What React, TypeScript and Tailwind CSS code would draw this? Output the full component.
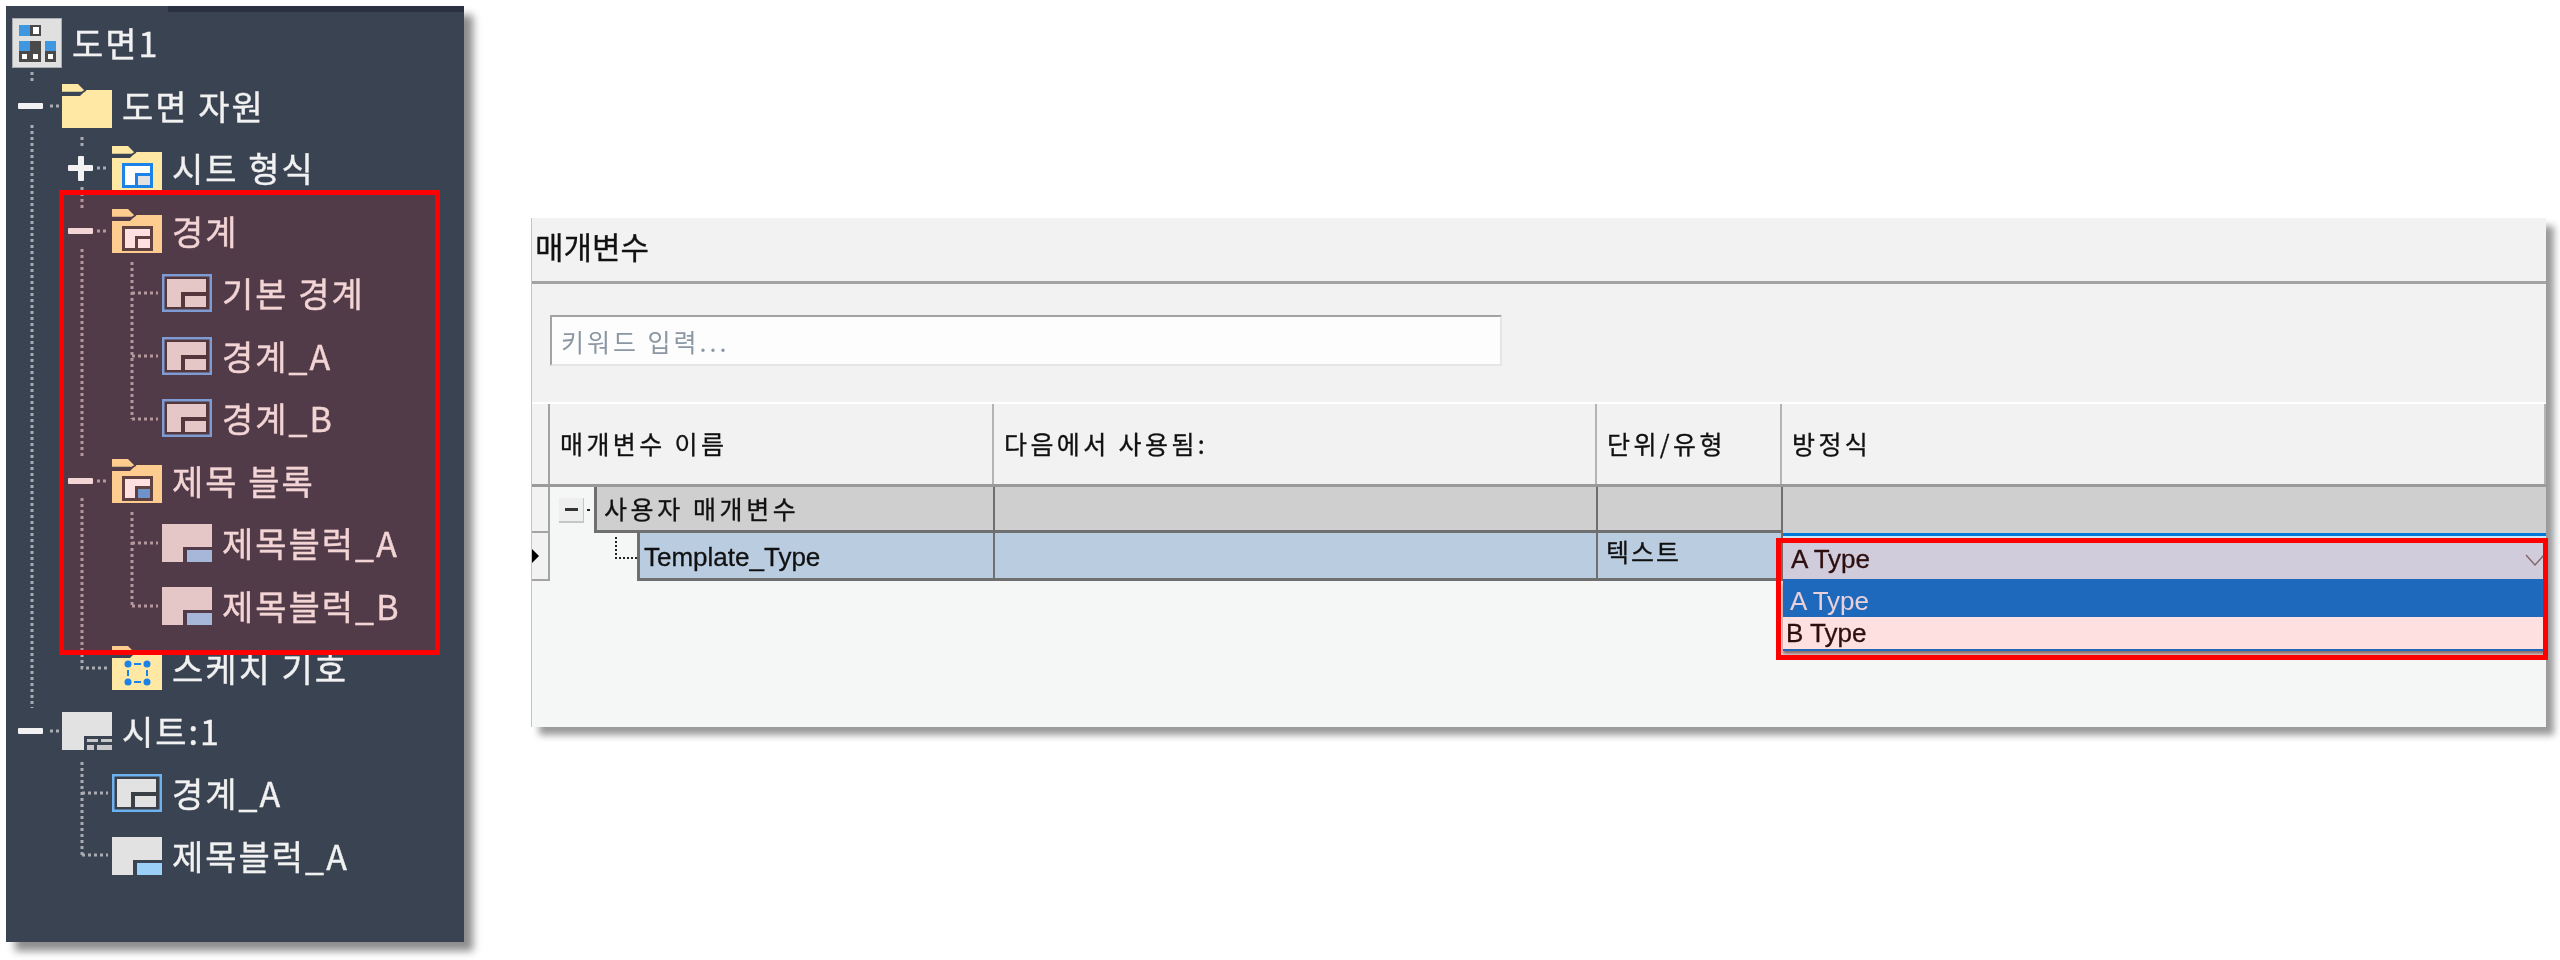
const krFont = "font-['Noto_Sans_CJK_KR','Liberation_Sans',sans-serif]";

function Folder({ children }: { children?: React.ReactNode }) {
  return (
    <svg width="50" height="44" viewBox="0 0 50 44" className="shrink-0">
      <path d="M0 0H16L22 6H50V44H0V12H18L22 8H0Z" fill="#ffe8a4" />
      <path d="M0 8.5H20L24 6" stroke="#3a4352" strokeWidth="1.5" fill="none" />
      {children}
    </svg>
  );
}

function InnerFrame({ color, block }: { color: string; block: string }) {
  return (
    <g>
      <rect x="10" y="17" width="31" height="25" fill={color} />
      <path d="M13 20H38V27H23V39H13Z" fill="#fff" />
      <rect x="26" y="30" width="12" height="9" fill={block} />
    </g>
  );
}

function SketchGlyph() {
  return (
    <g fill="#1b82e8">
      <circle cx="16" cy="18" r="3.5" />
      <circle cx="35" cy="18" r="3.5" />
      <circle cx="16" cy="36" r="3.5" />
      <circle cx="35" cy="36" r="3.5" />
      <rect x="22" y="17" width="7" height="2" />
      <rect x="22" y="35" width="7" height="2" />
      <rect x="15" y="24" width="2" height="6" />
      <rect x="34" y="24" width="2" height="6" />
    </g>
  );
}

function BorderIcon() {
  return (
    <svg width="50" height="38" viewBox="0 0 50 38" className="shrink-0">
      <rect width="50" height="38" fill="#6cb2f0" />
      <rect x="2.5" y="2.5" width="45" height="33" fill="#3b3f46" />
      <path d="M5 5H44V18H19V33H5Z" fill="#e2e2e2" />
      <rect x="23" y="22" width="21" height="11" fill="#e2e2e2" />
    </svg>
  );
}

function TitleBlockIcon() {
  return (
    <svg width="50" height="38" viewBox="0 0 50 38" className="shrink-0">
      <path d="M0 0H50V23H21V38H0Z" fill="#e2e2e2" />
      <rect x="25" y="26" width="25" height="12" fill="#9bd0f8" />
    </svg>
  );
}

function SheetIcon() {
  return (
    <svg width="50" height="38" viewBox="0 0 50 38" className="shrink-0">
      <path d="M0 0H50V24H22V38H0Z" fill="#e2e2e2" />
      <rect x="25" y="27" width="11" height="3" fill="#c8c8c8" />
      <rect x="39" y="27" width="11" height="3" fill="#c8c8c8" />
      <rect x="25" y="33" width="7" height="5" fill="#c8c8c8" />
      <rect x="35" y="33" width="15" height="5" fill="#c8c8c8" />
    </svg>
  );
}

function DrawingIcon() {
  return (
    <svg width="50" height="50" viewBox="0 0 50 50" className="shrink-0">
      <rect width="50" height="50" fill="#e0e0e0" />
      <rect x="0.5" y="0.5" width="49" height="49" fill="none" stroke="#a9adb2" />
      <rect x="7" y="7" width="22" height="11" fill="#4a4a4a" />
      <rect x="7" y="7" width="11" height="11" fill="#3f97e0" />
      <rect x="21" y="9" width="6" height="7" fill="#fff" />
      <rect x="7" y="23" width="22" height="21" fill="#4a4a4a" />
      <rect x="7" y="23" width="11" height="10" fill="#3f97e0" />
      <rect x="10" y="36" width="5" height="5" fill="#fff" />
      <rect x="21" y="36" width="5" height="5" fill="#fff" />
      <rect x="33" y="23" width="11" height="21" fill="#4a4a4a" />
      <rect x="33" y="23" width="11" height="10" fill="#3f97e0" />
      <rect x="36" y="36" width="5" height="5" fill="#fff" />
    </svg>
  );
}

function Expander({ type }: { type?: "plus" | "minus" }) {
  return (
    <span className="w-[50px] shrink-0 pl-[6px] flex items-center">
      {type && (
        <span className="relative w-[25px] h-[6px] bg-[#f2f2f2] rounded-[1px]">
          {type === "plus" && (
            <span className="absolute left-[9.5px] top-[-9.5px] w-[6px] h-[25px] bg-[#f2f2f2] rounded-[1px]" />
          )}
        </span>
      )}
    </span>
  );
}

function TreeRow({
  level,
  expander,
  icon,
  label,
}: {
  level: 0 | 1 | 2 | 3;
  expander?: "plus" | "minus";
  icon: React.ReactNode;
  label: string;
}) {
  const indent = ["w-0", "w-0", "w-[50px]", "w-[100px]"][level];
  return (
    <div className="h-[62.5px] flex items-center pl-[6px]">
      <span className={`${indent} shrink-0`} />
      {level > 0 && <Expander type={expander} />}
      <span className="w-[50px] flex justify-center">{icon}</span>
      <span className="ml-[10px] text-[34px] leading-none text-[#f1f1f1] tracking-[2px] whitespace-pre [-webkit-text-stroke:0.4px]">
        {label}
      </span>
    </div>
  );
}

// connector dots, written in page coordinates
function TreeLines() {
  const lines = [
    "M32 72V84",
    "M32 125V708",
    "M50 106H60",
    "M82 137V146",
    "M82 187V208",
    "M97 168H108",
    "M97 231H108",
    "M82 249V458",
    "M82 498V668H108",
    "M132 262V419",
    "M132 293H158",
    "M132 356H158",
    "M132 419H158",
    "M132 512V606",
    "M132 543H158",
    "M132 606H158",
    "M97 481H108",
    "M50 731H60",
    "M82 762V855",
    "M82 793H108",
    "M82 855H108",
  ];
  return (
    <svg className="absolute left-0 top-0 pointer-events-none" width="458" height="936" viewBox="6 6 458 936">
      {lines.map((d) => (
        <path key={d} d={d} stroke="#a9acb1" strokeWidth="3" strokeDasharray="3 3" fill="none" />
      ))}
    </svg>
  );
}

function ModelTree() {
  return (
    <div className="relative w-[458px] h-[936px] ml-[6px] mt-[6px] shrink-0 bg-[#3a4352] shadow-[9px_9px_8px_rgba(0,0,0,0.45)]">
      <div className="absolute right-0 top-0 w-[296px] h-[6px] bg-[#2b3140]" />
      <TreeLines />
      <div className="pt-[6px]">
        <TreeRow level={0} icon={<DrawingIcon />} label="도면1" />
        <TreeRow level={1} expander="minus" icon={<Folder />} label="도면 자원" />
        <TreeRow
          level={2}
          expander="plus"
          icon={
            <Folder>
              <InnerFrame color="#1b82e8" block="#e2e2e2" />
            </Folder>
          }
          label="시트 형식"
        />
        <TreeRow
          level={2}
          expander="minus"
          icon={
            <Folder>
              <InnerFrame color="#4a4a4a" block="#fff" />
            </Folder>
          }
          label="경계"
        />
        <TreeRow level={3} icon={<BorderIcon />} label="기본 경계" />
        <TreeRow level={3} icon={<BorderIcon />} label="경계_A" />
        <TreeRow level={3} icon={<BorderIcon />} label="경계_B" />
        <TreeRow
          level={2}
          expander="minus"
          icon={
            <Folder>
              <InnerFrame color="#4a4a4a" block="#5aa6e6" />
            </Folder>
          }
          label="제목 블록"
        />
        <TreeRow level={3} icon={<TitleBlockIcon />} label="제목블럭_A" />
        <TreeRow level={3} icon={<TitleBlockIcon />} label="제목블럭_B" />
        <TreeRow
          level={2}
          icon={
            <Folder>
              <SketchGlyph />
            </Folder>
          }
          label="스케치 기호"
        />
        <TreeRow level={1} expander="minus" icon={<SheetIcon />} label="시트:1" />
        <TreeRow level={2} icon={<BorderIcon />} label="경계_A" />
        <TreeRow level={2} icon={<TitleBlockIcon />} label="제목블럭_A" />
      </div>
      {/* red highlight */}
      <div className="absolute left-[53px] top-[184px] w-[381px] h-[465px] border-[5px] border-[#ff0000] bg-[#ff0000]/12" />
    </div>
  );
}

function HeaderCell({ width, label }: { width: string; label: string }) {
  return (
    <div className={`${width} shrink-0 h-full flex items-center pl-[10px] border-r-2 border-[#b4b4b4] text-[25px] text-[#111111] tracking-[3.4px] [-webkit-text-stroke:0.3px]`}>
      {label}
    </div>
  );
}

function ParameterPanel() {
  return (
    <div className="relative ml-[67px] mt-[218px] w-[2015px] h-[509px] shrink-0 bg-[#f5f7f6] border-l border-[#c4c4c4] shadow-[8px_8px_7px_rgba(0,0,0,0.4)]">
      <div className="h-[66px] pb-[6px] bg-[#f2f2f2] border-b-[3px] border-[#a3a3a3] flex items-center pl-[3px] text-[31px] text-[#111111] [-webkit-text-stroke:0.3px]">
        매개변수
      </div>
      <div className="h-[118px] bg-[#f2f2f2] pl-[18px] pt-[31px]">
        <input
          readOnly
          placeholder="키워드 입력..."
          className="w-[952px] h-[51px] pl-[9px] bg-[#fdfdfd] border-2 border-t-[#a3a3a3] border-l-[#a3a3a3] border-r-[#e6e6e6] border-b-[#e6e6e6] text-[25px] tracking-[3px] placeholder:text-[#8b97a3] outline-none"
        />
      </div>
      {/* header */}
      <div className="h-[85px] flex bg-[#f2f2f2] border-t-2 border-b-[3px] border-t-white border-b-[#9a9a9a]">
        <div className="w-[18px] shrink-0 h-full border-r-2 border-[#a3a3a3]" />
        <HeaderCell width="w-[444px]" label="매개변수 이름" />
        <HeaderCell width="w-[603px]" label="다음에서 사용됨:" />
        <HeaderCell width="w-[185px]" label="단위/유형" />
        <HeaderCell width="flex-1" label="방정식" />
      </div>
      {/* group row */}
      <div className="h-[46px] flex">
        <div className="w-[18px] shrink-0 bg-[#f2f2f2] border-r-2 border-b-2 border-[#a3a3a3]" />
        <div className="w-[44px] shrink-0 flex items-center pl-[9px]">
          <span className="w-[25px] h-[25px] bg-[#eeeeee] border-b-2 border-r border-[#c6c6c6] flex items-center justify-center">
            <span className="w-[13px] h-[3px] bg-[#333333]" />
          </span>
          <span className="ml-[3px] w-[3px] h-[2px] bg-[#222222]" />
        </div>
        <div className="w-[401px] shrink-0 bg-[#cfcfcf] border-l-[3px] border-r-2 border-b-[3px] border-[#6f6f6f] flex items-center pl-[7px] text-[25px] tracking-[3.6px] text-[#111111] [-webkit-text-stroke:0.3px]">
          사용자 매개변수
        </div>
        <div className="w-[603px] shrink-0 bg-[#cfcfcf] border-r-2 border-b-[3px] border-[#6f6f6f]" />
        <div className="w-[185px] shrink-0 bg-[#cfcfcf] border-r-2 border-b-[3px] border-[#6f6f6f]" />
        <div className="flex-1 bg-[#cfcfcf]" />
      </div>
      {/* value row */}
      <div className="h-[48px] flex">
        <div className="w-[18px] shrink-0 bg-[#f2f2f2] border-r-2 border-b-2 border-[#a3a3a3] flex items-center">
          <span className="w-0 h-0 border-y-[7px] border-y-transparent border-l-[7px] border-l-black" />
        </div>
        <div className="relative w-[87px] shrink-0">
          <span className="absolute left-[65px] top-[4px] w-[22px] h-[22px] border-l-2 border-b-2 border-dotted border-[#222222]" />
        </div>
        <div className="w-[358px] shrink-0 bg-[#bacde0] border-l-[3px] border-r-2 border-b-[3px] border-[#6f6f6f] flex items-center pl-[4px] pt-[3px] text-[26px] font-['Liberation_Sans',sans-serif] text-[#111111] [-webkit-text-stroke:0.3px]">
          Template_Type
        </div>
        <div className="w-[603px] shrink-0 bg-[#bacde0] border-r-2 border-b-[3px] border-[#6f6f6f]" />
        <div className="w-[185px] shrink-0 bg-[#bacde0] border-r-2 border-b-[3px] border-[#6f6f6f] pl-[8px] pt-[2px] text-[25px] leading-[32px] tracking-[2px] text-[#111111] [-webkit-text-stroke:0.3px]">
          텍스트
        </div>
        {/* combo */}
        <div className="relative flex-1 min-w-0">
          <div className="h-full bg-[#cae8f9] border-t-[3px] border-b-2 border-[#0078d7] pl-[8px] pt-[4px] flex items-center justify-between font-['Liberation_Sans',sans-serif] text-[26px] text-[#111111] [-webkit-text-stroke:0.3px]">
            A Type
            <svg width="20" height="12" viewBox="0 0 20 12" className="shrink-0 mr-[1px]">
              <path d="M1 1L10 11L19 1" stroke="#777777" strokeWidth="1.5" fill="none" />
            </svg>
          </div>
          <div className="absolute left-0 right-0 top-full bg-white border-b-2 border-[#0078d7] shadow-[0_3px_3px_rgba(0,0,0,0.5)] font-['Liberation_Sans',sans-serif] text-[26px]">
            <div className="h-[36px] bg-[#0078d7] text-[#e6eef8] pl-[7px] pt-[5px] flex items-center">A Type</div>
            <div className="h-[32px] text-[#111111] pl-[3px] flex items-center [-webkit-text-stroke:0.3px]">B Type</div>
          </div>
        </div>
      </div>
      {/* red highlight */}
      <div className="absolute left-[1244px] top-[320px] w-[772px] h-[122px] border-[5px] border-[#ff0000] bg-[#ff0000]/12" />
    </div>
  );
}

export default function App() {
  return (
    <div className={`w-[2560px] h-[960px] bg-white overflow-hidden flex items-start blur-[0.6px] ${krFont}`}>
      <ModelTree />
      <ParameterPanel />
    </div>
  );
}
